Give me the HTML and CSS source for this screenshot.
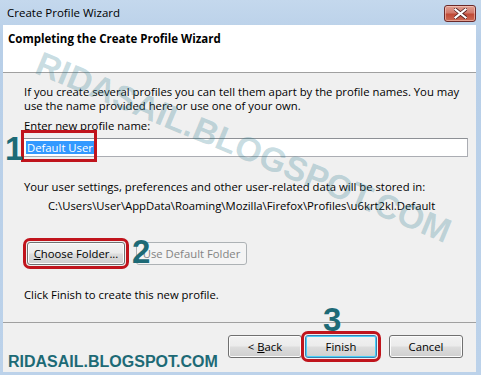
FILE: index.html
```html
<!DOCTYPE html>
<html lang="en">
<head>
    <meta charset="UTF-8">
    <title>Create Profile Wizard</title>
    <link rel="stylesheet" href="styles.css">
</head>
<body>
    <div class="window">
        <div class="titlebar">
            <div class="caption">Create Profile Wizard</div>
            <div class="close">
                <svg width="13" height="11" viewBox="0 0 13 11">
                    <path d="M1.5 1.5 L11.5 9.5 M11.5 1.5 L1.5 9.5" stroke="#4a1a1a" stroke-width="3.6" stroke-linecap="square"/>
                    <path d="M1.5 1.5 L11.5 9.5 M11.5 1.5 L1.5 9.5" stroke="#fff" stroke-width="2.2" stroke-linecap="square"/>
                </svg>
            </div>
        </div>
        <div class="client">
            <div class="header">Completing the Create Profile Wizard</div>
            <div class="content">
                <p class="intro">If you create several profiles you can tell them apart by the profile names. You may<br>use the name provided here or use one of your own.</p>
                <div class="label">Enter new profile name:</div>
                <div class="namebox"><span class="selected">Default User</span></div>
                <p class="stored">Your user settings, preferences and other user-related data will be stored in:</p>
                <div class="path">C:\Users\User\AppData\Roaming\Mozilla\Firefox\Profiles\u6krt2kl.Default</div>
                <div class="folder-row">
                    <button class="btn marked"><u>C</u>hoose Folder...</button>
                    <button class="btn disabled">Use Default Folder</button>
                </div>
                <p class="finish-note">Click Finish to create this new profile.</p>

                <div class="mark-box"></div>
                <div class="step step1">1</div>
                <div class="step step2">2</div>
            </div>
            <div class="footer">
                <div class="blog">RIDASAIL.BLOGSPOT.COM</div>
                <div class="nav">
                    <button class="btn"><span>&lt; <u>B</u>ack</span></button>
                    <button class="btn default marked">Finish</button>
                    <button class="btn cancel">Cancel</button>
                </div>
                <div class="step step3">3</div>
            </div>
            <div class="watermark">RIDASAIL.BLOGSPOT.COM</div>
        </div>
    </div>
</body>
</html>
```

FILE: styles.css
```css
body {
    margin: 0px;
    background: white;
    font-family: "Open Sans", "Noto Sans", sans-serif;
    font-size: 11.3px;
    color: black;
}

.window {
    display: flex;
    flex-direction: column;
    width: 481px;
    height: 375px;
    box-sizing: border-box;
    padding: 0px 5px 3px 3px;
    background: linear-gradient(#c4d8ed, #b8cfe8 40px, #bcd2ea);
}

.titlebar {
    display: flex;
    align-items: flex-start;
    justify-content: space-between;
    height: 25px;
}

.caption {
    padding: 5px 0px 0px 4px;
    font-size: 11.5px;
    line-height: 16px;
}

.close {
    display: flex;
    align-items: center;
    justify-content: center;
    width: 30px;
    height: 15px;
    margin: 5px 0px 0px 0px;
    border: 1px solid #6b2a2a;
    border-radius: 3px;
    background: linear-gradient(#e0a093, #d27a6c 45%, #c04a36 55%, #cc6a55);
    box-shadow: inset 0 0 0 1px rgba(255, 220, 210, 0.5);
}

.client {
    position: relative;
    flex: 1;
    display: flex;
    flex-direction: column;
    overflow: hidden;
    background: #f0f0f0;
}

.header {
    height: 48px;
    box-sizing: border-box;
    padding: 6px 0px 0px 5px;
    background: white;
    border-bottom: 1px solid #a0a0a0;
    font-weight: bold;
    font-size: 11.5px;
    line-height: 16px;
}

.content {
    position: relative;
    flex: 1;
    padding: 12px 8px 0px 21px;
    line-height: 14px;
}

.content p {
    margin: 0px;
}

.label {
    margin-top: 6px;
}

.namebox {
    height: 17px;
    margin: 5px 0px 0px -1px;
    border: 1px solid #abadb3;
    border-top-color: #8d9095;
    background: white;
    display: flex;
    align-items: center;
    padding-left: 2px;
}

.selected {
    background: #3399ff;
    color: white;
    line-height: 13px;
    padding: 0px 1px;
}

.content .stored {
    margin-top: 23px;
}

.path {
    margin-top: 5px;
    padding-left: 24px;
}

.folder-row {
    display: flex;
    gap: 11px;
    margin-top: 29px;
}

.content .finish-note {
    margin-top: 23px;
}

.btn {
    height: 23px;
    padding: 0px 6px;
    border: 1px solid #707070;
    border-radius: 3px;
    background: linear-gradient(#f2f2f2, #ebebeb 49%, #dddddd 51%, #cfcfcf);
    box-shadow: inset 0 0 0 1px #fcfcfc;
    font-family: inherit;
    font-size: 11.3px;
    color: black;
}

.btn.disabled {
    width: 111px;
    padding: 0px;
    border-color: #adb2b5;
    background: #f4f4f4;
    box-shadow: none;
    color: #838383;
}

.marked {
    outline: 3px solid #c0141c;
    outline-offset: 1px;
}

.folder-row .marked {
    width: 98px;
    margin-left: 3px;
    padding: 0px;
}

.mark-box {
    position: absolute;
    left: 18px;
    top: 57px;
    width: 70px;
    height: 26px;
    border: 3px solid #c0141c;
}

.step {
    position: absolute;
    font-family: "Liberation Sans", Arial, sans-serif;
    font-weight: bold;
    font-size: 33px;
    line-height: 33px;
    color: #1d6a76;
}

.step1 {
    left: 2px;
    top: 59px;
}

.step2 {
    left: 129px;
    top: 162px;
}

.footer {
    position: relative;
    display: flex;
    align-items: flex-start;
    justify-content: space-between;
    height: 50px;
    box-sizing: border-box;
    border-top: 1px solid #a0a0a0;
    padding: 12px 13px 0px 5px;
}

.blog {
    margin-top: 19px;
    font-family: "Liberation Sans", Arial, sans-serif;
    font-weight: bold;
    font-size: 16px;
    line-height: 16px;
    color: #1d6a76;
}

.nav {
    display: flex;
}

.nav .btn {
    width: 74px;
}

.nav .btn.default {
    width: 72px;
    margin: 0px 12px 0px 3px;
    border-color: #3c7fb1;
    box-shadow: inset 0 0 0 1px #48d0f8;
}

.step3 {
    left: 320px;
    top: -20px;
}

.watermark {
    position: absolute;
    left: 42px;
    top: 19px;
    font-family: "Liberation Sans", Arial, sans-serif;
    font-weight: bold;
    font-size: 34px;
    color: rgba(40, 120, 140, 0.26);
    transform: rotate(22.5deg);
    transform-origin: left top;
    white-space: nowrap;
    pointer-events: none;
}
```
